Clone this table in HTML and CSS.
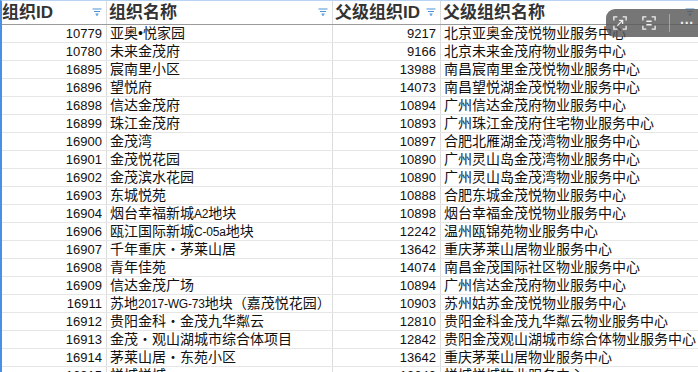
FILE: index.html
```html
<!DOCTYPE html>
<html lang="zh-CN">
<head>
<meta charset="utf-8">
<link rel="stylesheet" href="styles.css">
</head>
<body>
<div class="sheet">
  <div class="row head">
    <div class="cell"><span>组织ID</span><svg class="filter" viewBox="0 0 10 8"><path d="M0.5 1h9M2 3.5h6M3.5 6h3M5 6v2"/></svg></div>
    <div class="cell"><span>组织名称</span><svg class="filter" viewBox="0 0 10 8"><path d="M0.5 1h9M2 3.5h6M3.5 6h3M5 6v2"/></svg></div>
    <div class="cell"><span>父级组织ID</span><svg class="filter" viewBox="0 0 10 8"><path d="M0.5 1h9M2 3.5h6M3.5 6h3M5 6v2"/></svg></div>
    <div class="cell"><span>父级组织名称</span><svg class="filter" viewBox="0 0 10 8"><path d="M0.5 1h9M2 3.5h6M3.5 6h3M5 6v2"/></svg></div>
  </div>
  <div class="row"><div class="cell num">10779</div><div class="cell">亚奥•悦家园</div><div class="cell num">9217</div><div class="cell">北京亚奥金茂悦物业服务中心</div></div>
  <div class="row"><div class="cell num">10780</div><div class="cell">未来金茂府</div><div class="cell num">9166</div><div class="cell">北京未来金茂府物业服务中心</div></div>
  <div class="row"><div class="cell num">16895</div><div class="cell">宸南里小区</div><div class="cell num">13988</div><div class="cell">南昌宸南里金茂悦物业服务中心</div></div>
  <div class="row"><div class="cell num">16896</div><div class="cell">望悦府</div><div class="cell num">14073</div><div class="cell">南昌望悦湖金茂悦物业服务中心</div></div>
  <div class="row"><div class="cell num">16898</div><div class="cell">信达金茂府</div><div class="cell num">10894</div><div class="cell">广州信达金茂府物业服务中心</div></div>
  <div class="row"><div class="cell num">16899</div><div class="cell">珠江金茂府</div><div class="cell num">10893</div><div class="cell">广州珠江金茂府住宅物业服务中心</div></div>
  <div class="row"><div class="cell num">16900</div><div class="cell">金茂湾</div><div class="cell num">10897</div><div class="cell">合肥北雁湖金茂湾物业服务中心</div></div>
  <div class="row"><div class="cell num">16901</div><div class="cell">金茂悦花园</div><div class="cell num">10890</div><div class="cell">广州灵山岛金茂湾物业服务中心</div></div>
  <div class="row"><div class="cell num">16902</div><div class="cell">金茂滨水花园</div><div class="cell num">10890</div><div class="cell">广州灵山岛金茂湾物业服务中心</div></div>
  <div class="row"><div class="cell num">16903</div><div class="cell">东城悦苑</div><div class="cell num">10888</div><div class="cell">合肥东城金茂悦物业服务中心</div></div>
  <div class="row"><div class="cell num">16904</div><div class="cell">烟台幸福新城<span class="lat">A2</span>地块</div><div class="cell num">10898</div><div class="cell">烟台幸福金茂悦物业服务中心</div></div>
  <div class="row"><div class="cell num">16906</div><div class="cell">瓯江国际新城<span class="lat">C-05a</span>地块</div><div class="cell num">12242</div><div class="cell">温州瓯锦苑物业服务中心</div></div>
  <div class="row"><div class="cell num">16907</div><div class="cell">千年重庆・茅莱山居</div><div class="cell num">13642</div><div class="cell">重庆茅莱山居物业服务中心</div></div>
  <div class="row"><div class="cell num">16908</div><div class="cell">青年佳苑</div><div class="cell num">14074</div><div class="cell">南昌金茂国际社区物业服务中心</div></div>
  <div class="row"><div class="cell num">16909</div><div class="cell">信达金茂广场</div><div class="cell num">10894</div><div class="cell">广州信达金茂府物业服务中心</div></div>
  <div class="row"><div class="cell num">16911</div><div class="cell">苏地<span class="lat">2017-WG-73</span>地块（嘉茂悦花园）</div><div class="cell num">10903</div><div class="cell">苏州姑苏金茂悦物业服务中心</div></div>
  <div class="row"><div class="cell num">16912</div><div class="cell">贵阳金科・金茂九华粼云</div><div class="cell num">12810</div><div class="cell">贵阳金科金茂九华粼云物业服务中心</div></div>
  <div class="row"><div class="cell num">16913</div><div class="cell">金茂・观山湖城市综合体项目</div><div class="cell num">12842</div><div class="cell">贵阳金茂观山湖城市综合体物业服务中心</div></div>
  <div class="row"><div class="cell num">16914</div><div class="cell">茅莱山居・东苑小区</div><div class="cell num">13642</div><div class="cell">重庆茅莱山居物业服务中心</div></div>
  <div class="row"><div class="cell num">16915</div><div class="cell">悦城悦城</div><div class="cell num">13643</div><div class="cell">悦城悦城物业服务中心</div></div>
</div>
<div class="toolbar">
  <svg class="tb-icon" viewBox="0 0 16 16"><path d="M1 5V1h4M11 1h4v4M15 11v4h-4M5 15H1v-4M5 11l6-6M7 5h4v4"/></svg>
  <svg class="tb-icon" viewBox="0 0 16 16"><path d="M1 5V1h4M11 1h4v4M15 11v4h-4M5 15H1v-4M5 6h6M5 10h6"/></svg>
  <span class="tb-sep"></span>
  <span class="tb-more">···</span>
</div>
</body>
</html>
```
FILE: styles.css
```css
html, body {
  margin: 0;
  padding: 0;
  background: #fff;
  overflow: hidden;
}
body {
  width: 698px;
  height: 372px;
  position: relative;
  font-family: "Liberation Sans", "Noto Sans CJK SC", sans-serif;
  color: #111;
}
.sheet {
  border-left: 2px solid #4a8fe6;
  border-top: 1px solid #b9d4f3;
  box-sizing: border-box;
  height: 372px;
  overflow: hidden;
}
.row {
  display: grid;
  grid-template-columns: 105px 226px 108px 259px;
  height: 18px;
  border-bottom: 1px solid #e6e6e6;
  box-sizing: border-box;
}
.cell {
  border-right: 1px solid #dcdcdc;
  box-sizing: border-box;
  font-size: 14px;
  line-height: 17px;
  padding: 0 3px 0 3px;
  white-space: nowrap;
  overflow: hidden;
}
.cell .lat {
  font-size: 12px;
  letter-spacing: -0.2px;
}
.cell.num {
  text-align: right;
  font-size: 13px;
  padding-right: 4px;
}
.row.head {
  height: 24px;
  border-bottom: 1px solid #9a9a9a;
}
.head .cell {
  display: flex;
  align-items: center;
  justify-content: space-between;
  font-size: 17px;
  font-weight: 700;
  color: #333;
  padding: 1px 4px 0 2px;
  line-height: 22px;
}
.head .cell:first-child {
  padding-left: 0;
}
.filter {
  width: 10px;
  height: 8px;
  flex: none;
  fill: none;
  stroke: #4d93d6;
  stroke-width: 1.2;
  margin-top: -2px;
}
.toolbar {
  position: absolute;
  left: 606px;
  top: 9px;
  width: 100px;
  height: 28px;
  border-radius: 9px;
  background: rgba(88, 88, 88, 0.82);
  display: flex;
  align-items: center;
  padding-left: 7px;
  box-sizing: border-box;
}
.tb-icon {
  width: 14px;
  height: 14px;
  fill: none;
  stroke: #f0f0f0;
  stroke-width: 1.5;
  flex: none;
}
.tb-icon + .tb-icon {
  margin-left: 15px;
}
.tb-sep {
  width: 1px;
  height: 18px;
  background: rgba(200, 200, 200, 0.6);
  margin-left: 13px;
}
.tb-more {
  color: #f0f0f0;
  font-size: 14px;
  font-weight: 700;
  margin-left: 10px;
  line-height: 14px;
}
```
